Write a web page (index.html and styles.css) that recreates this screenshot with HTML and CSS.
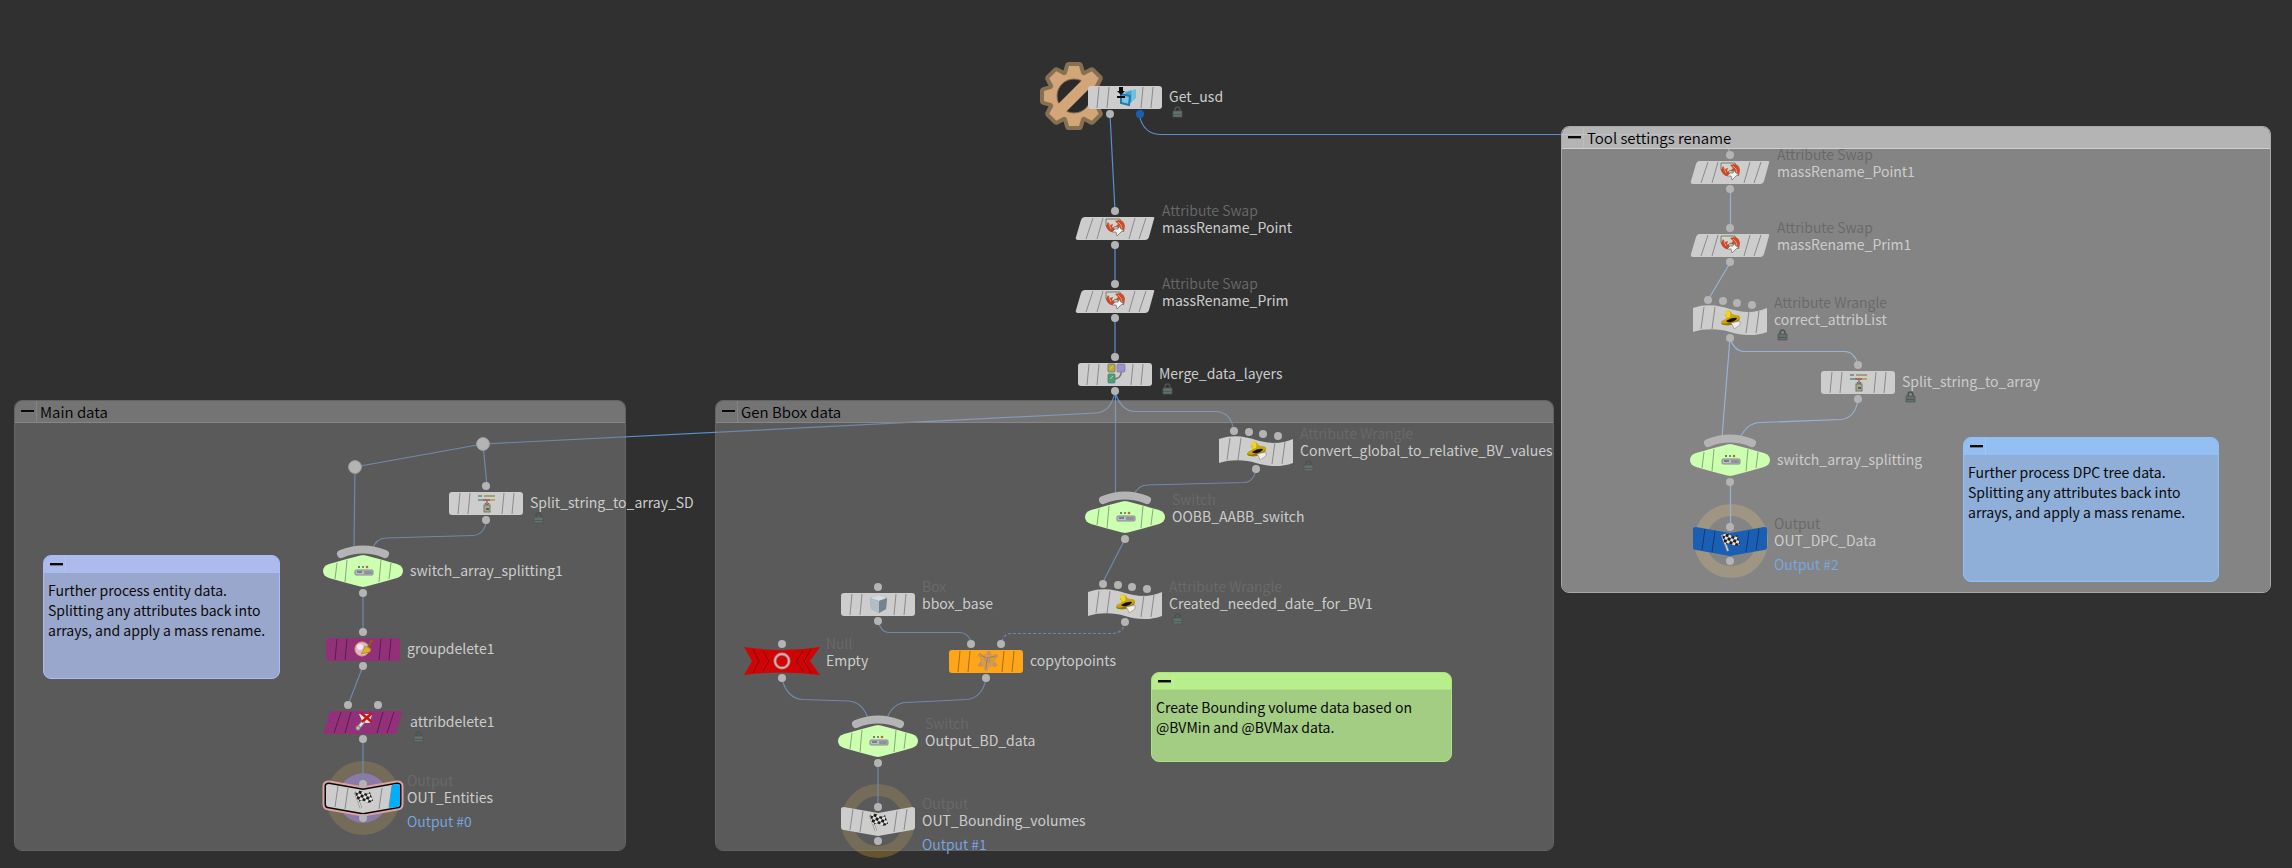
FILE: index.html
```html
<!DOCTYPE html>
<html lang="en">
<head>
<meta charset="utf-8">
<title>Network editor</title>
<link rel="stylesheet" href="styles.css">
</head>
<body>
<svg class="defs" width="0" height="0" aria-hidden="true">
  <defs>
    <!-- node bodies, centred on 0,0 -->
    <g id="rect">
      <rect class="body" x="-37" y="-11" width="74" height="23" rx="3"/>
      <path class="stripes" d="M-26-10L-28 11M-16-10L-18 11M18-10L16 11M28-10L26 11"/>
    </g>
    <g id="slant">
      <path class="body" d="M-30-11H38Q40-11 39-9L34 9Q33 12 30 12H-37Q-40 12-39 9L-34-8Q-33-11-30-11Z"/>
      <path class="stripes" d="M-22-10L-29 11M-12-10L-18 11M20-10L14 11M31-10L24 11"/>
    </g>
    <g id="wave">
      <path class="body" d="M-37-12C-22-17-10-14 0-11S24-6 37-12V12C24 17 10 15 0 12S-24 8-37 12Z"/>
      <path class="stripes" d="M-26-13L-29 9M-15-13L-18 9M19-9L16 13M29-9L26 13"/>
    </g>
    <g id="lens">
      <path class="arch" d="M-22-17Q0-26 22-17"/>
      <path class="body" d="M0-16Q2-16 34-7Q40-5 40 0Q40 5 34 7Q2 16 0 16T-34 7Q-40 5-40 0Q-40-5-34-7Q-2-16 0-16Z"/>
      <path class="stripes" d="M-26-8L-28 8M-16-11L-18 11M18-11L16 11M28-8L26 8"/>
    </g>
    <path id="bannerShape" d="M-34-14L0-8L34-14Q37-14 37-12V6Q37 9 34 9L0 15L-34 9Q-37 9-37 6V-12Q-37-14-34-14Z"/>
    <g id="banner">
      <use class="body" href="#bannerShape"/>
      <path class="stripes" d="M-25-12L-28 9M-15-10L-18 11M19-10L16 11M29-12L26 9"/>
    </g>
    <g id="ribbon">
      <path class="body" d="M-38-14Q0-8 38-14L28 0L38 14Q0 9-38 14L-30 0Z"/>
      <path class="stripes" d="M-29-12L-23 0L-29 12M-19-10L-13 0L-19 10M29-12L22 0L29 12M21-10L14 0L21 10"/>
    </g>
    <g id="ports11"><circle class="port" cy="-17" r="4"/><circle class="port" cy="17" r="4"/></g>
    <g id="ports21"><circle class="port" cx="-15" cy="-17" r="4"/><circle class="port" cx="15" cy="-17" r="4"/><circle class="port" cy="17" r="4"/></g>
    <g id="ports41"><circle class="port" cx="-22" cy="-20" r="4"/><circle class="port" cx="-7" cy="-19" r="4"/><circle class="port" cx="7" cy="-17" r="4"/><circle class="port" cx="22" cy="-15" r="4"/><circle class="port" cy="18" r="4"/></g>
    <g id="portsOut"><circle class="port" cy="-14" r="4"/><circle class="port" cy="20" r="4"/></g>

    <!-- icons, 20 x 20 centred on 0,0 -->
    <g id="iSwap">
      <path d="M-9-9H5L7-4L-1-1L-4 3L-9-2Z" fill="#d3d3ca" stroke="#7a7a72"/>
      <path d="M-9-2L-7-6L-5-3L-2-4L-3-1L0 1L-1 4L-4 4Q-8 2-9-2Z" fill="#c8492a"/>
      <path d="M0-7L4-8Q9-8 10-2L9 4L6 3L4 0L1-1L3-4Z" fill="#cc4d2c"/>
      <path d="M-6-4L-4 1M3-6L6-3L7 1" stroke="#e89a78" fill="none"/>
      <path d="M0 1L3 1L4-2L6 1L9 2L6 4L2 8L1 4L-3 4Z" fill="#f2f2f0" stroke="#666" stroke-width=".7"/>
    </g>
    <g id="iUsd">
      <path d="M4-6L11-8V1L5 6Z" fill="#6cc0de"/>
      <path d="M0-5L7-7V5L1 8Z" fill="#49a3cb" stroke="#8bd0e8" stroke-width=".7"/>
      <path d="M-4-3L5-1L4 8L-4 6Z" fill="#7cc4df" stroke="#2579ab" stroke-width="2"/>
      <path d="M-6-10H-2V-6H0L-4-2L-8-6H-6ZM-8-1H0V1H-8Z" fill="#0a0a0a"/>
    </g>
    <g id="iMerge">
      <path d="M6-2V0Q5 4 0 5H-2" fill="none" stroke="#777" stroke-width="1.5"/>
      <rect x="-7" y="-10" width="7" height="8" rx="1" fill="#b5ab4c" stroke="#6f6a3a" stroke-width=".7"/>
      <rect x="2" y="-10" width="8" height="8" rx="1" fill="#9a92cc" stroke="#7d78a4" stroke-width=".7"/>
      <rect x="-7" y="0" width="7" height="9" rx="1" fill="#4d9f7c" stroke="#3d7c62" stroke-width=".7"/>
      <path d="M-5-5L-2-8M-5 5L-2 2" stroke="#ddd67c" stroke-width=".8"/>
    </g>
    <g id="iHat">
      <path d="M-5-8Q-2-11 1-8Q2-5 6-5Q11-5 10-1Q8 4 0 5Q-8 6-9 3Q-9 0-4-1Q-3-3-5-5Z" fill="#c9a40c"/>
      <path d="M-5-8Q-2-11 0-8Q1-5 0-3L-4-2Q-3-5-5-6Z" fill="#ecd62b"/>
      <path d="M-9 3Q-5 5 1 2Q7 2 10-2Q8 4 0 5Q-8 6-9 3Z" fill="#8f7412"/>
      <path d="M-4 1Q2-3 7-2Q6 1 1 2Q-2 3-4 1Z" fill="#151205"/>
      <path d="M1 3L10 1V5L7 7L4 9L3 6Z" fill="#f0f0e6" stroke="#888" stroke-width=".6"/>
    </g>
    <g id="iSwitch">
      <circle cx="-4" cy="-4" r="1" fill="#555"/><circle cy="-4" r="1" fill="#666"/><circle cx="4" cy="-4" r="1.3" fill="#c8623a"/>
      <rect x="-8" y="-1" width="18" height="5" rx="1" fill="#b9bcc4" stroke="#84888f"/>
      <rect x="1" y="0" width="8" height="3" rx="1" fill="#8e9198"/>
      <path d="M-6 1H-1" stroke="#555" stroke-width="1.2"/>
    </g>
    <pattern id="checks" width="6" height="6" patternUnits="userSpaceOnUse" patternTransform="rotate(18)">
      <path d="M0 0H6V6H0Z" fill="#e2e2de"/><path d="M0 0H3V3H0ZM3 3H6V6H3Z" fill="#1b1b1b"/>
    </pattern>
    <g id="iFlag">
      <path d="M-8-6L-2 10" stroke="#8f948c" stroke-width="2.4"/><path d="M-8-6L-2 10" stroke="#dfe2da"/>
      <path d="M-8-6Q-3-9 0-6Q4-3 7-6L10 3Q6 6 3 4Q-1 1-5 4Z" fill="url(#checks)"/>
    </g>
    <g id="iBroom">
      <circle cx="-1" cy="0" r="7" fill="#dcb9cf" stroke="#dca36c"/>
      <circle cx="-3" cy="-2" r="3" fill="#f3e6ef"/>
      <path d="M9-9L5-2" stroke="#8a6512" stroke-width="2"/>
      <path d="M2-3L8 0L7 3L-2 5Q1 1 2-3Z" fill="#d9b429" stroke="#9c7a14" stroke-width=".6"/>
    </g>
    <g id="iAttDel">
      <path d="M-4-8H9L7 1H0Z" fill="#e8e4dc"/>
      <path d="M-4 5L1-1" stroke="#888" stroke-width="4"/><path d="M-4 5L1-1" stroke="#e6e6e6" stroke-width="2"/>
      <circle cx="-5" cy="6" r="2.2" fill="#bdbdbd" stroke="#777"/>
      <path d="M-2-9L9 0M9-9L-1 0" stroke="#cc1414" stroke-width="2.6"/>
    </g>
    <g id="iCube">
      <path d="M-8-6L1-9L9-6L8 5L1 9L-7 5Z" fill="#8d9aa5"/>
      <path d="M-8-6L1-9L9-6L1-3Z" fill="#d5dde3"/>
      <path d="M-8-6L1-3V9L-7 5Z" fill="#b1bec8"/>
      <path d="M1-3L9-6L8 5L1 9Z" fill="#75838f"/>
    </g>
    <g id="iCopy">
      <path d="M-6-6L3-8L10-5L9 4L0 8L-6 4Z" fill="#d99a4a"/>
      <path d="M-6-6L1-3L10-5M1-3L0 8" stroke="#b07c3c" fill="none"/>
      <g fill="#c4a78a" stroke="#9a7a5a" stroke-width=".6"><circle cx="-6" cy="-6" r="1.4"/><circle cx="3" cy="-8" r="1.4"/><circle cx="10" cy="-5" r="1.4"/><circle cx="9" cy="4" r="1.4"/><circle cx="0" cy="8" r="1.4"/><circle cx="-6" cy="4" r="1.4"/><circle cx="0" cy="-2" r="1.4"/><circle cx="3" cy="0" r="1.4"/></g>
    </g>
    <g id="iNull"><circle r="7" fill="#cf0707" stroke="#b98787" stroke-width="3"/><circle r="7" fill="none" stroke="#e0c4c4" stroke-width="1"/></g>
    <g id="iSplit">
      <path d="M-8-8H-4V-6H-8Z" fill="#8b8f93"/><path d="M-2-8H9V-6H-2Z" fill="#a39f7a"/>
      <path d="M-8-4H-3V-2H-8Z" fill="#6da39a"/><path d="M-3-4H4V-2H-3Z" fill="#b0675c"/><path d="M4-4H9V-2H4Z" fill="#b5a864"/>
      <path d="M1-2V3M-1 0L1 3L3 0" stroke="#4a4a4a" fill="none"/>
      <rect x="-2" y="2" width="6" height="7" fill="#a9a78e" stroke="#77776c"/><path d="M0 5H3V7H0Z" fill="#5f6052"/>
    </g>
    <g id="lock">
      <path d="M3 5V4Q3 1 5.500 1T8 4V5" fill="none" stroke="#4b5452" stroke-width="1.500"/>
      <path d="M1 5H10V11H1Z" fill="#62716e" stroke="#4b5452" stroke-width=".7"/><path d="M1 8H10V9H1Z" fill="#4f5b58"/>
    </g>
    <path id="tooth" d="M-8-20L-5-30H5L8-20Z"/>
    <g id="gearShape">
      <circle r="23"/>
      <use href="#tooth"/><use href="#tooth" transform="rotate(45)"/><use href="#tooth" transform="rotate(90)"/><use href="#tooth" transform="rotate(135)"/><use href="#tooth" transform="rotate(180)"/><use href="#tooth" transform="rotate(225)"/><use href="#tooth" transform="rotate(270)"/><use href="#tooth" transform="rotate(315)"/>
    </g>
  </defs>
</svg>

<main class="canvas">
  <svg class="wires" aria-hidden="true">
    <g class="halo">
      <circle cx="363" cy="798" r="31"/><circle cx="878" cy="821" r="31"/><circle cx="1731" cy="541" r="31"/>
    </g>
    <circle class="display-halo" cx="363" cy="798" r="25"/>
    <g class="wire">
      <path d="M1110 114L1115 211"/>
      <path d="M1139 114Q1143 134 1160 134.500H1710Q1727 136 1730 155"/>
      <path d="M1115 245V284M1115 318V357"/>
      <path d="M1115 392Q1111 412 1096 413L483 444L355 467L354 548"/>
      <path d="M1115.500 392V495"/>
      <path d="M1115 392Q1121 411 1135 411.500H1216Q1231 412 1234 431"/>
      <path d="M483 444L487 486M487 520Q484 535 473 535.500L386 538Q376 538 372 550"/>
      <path d="M363 592V632M363 666L348 705M363 739V784"/>
      <path d="M1256 469Q1254 482 1244 482.500L1147 485Q1138 485 1133 496"/>
      <path d="M1125 539L1102 584"/>
      <path d="M878 621Q881 632 888 632.500H960Q969 633 972 644"/>
      <path class="wire--dashed" d="M1125 622Q1123 633 1113 633.500H1011Q1003 634 1001 644"/>
      <path d="M782 679Q787 698 802 699.500L849 701Q862 702 868 718"/>
      <path d="M986 679Q982 698 967 699.500L906 702.500Q893 703 887 718"/>
      <path d="M878 762V807"/>
      <path d="M1730.500 190V228M1730 263L1708 300M1730 338L1722 437M1730.500 482V526"/>
      <path d="M1730 338Q1734 351 1744 351.500H1845Q1855 352 1858 365"/>
      <path d="M1858 400Q1855 418 1841 419.500L1760 422.500Q1747 423 1740 438"/>
    </g>
  </svg>

  <section class="netbox netbox--main">
    <header class="netbox__head"><button class="fold" type="button" aria-label="Collapse"></button><h2 class="netbox__title">Main data</h2></header>
    <div class="netbox__body"></div>
  </section>
  <section class="netbox netbox--gen">
    <header class="netbox__head"><button class="fold" type="button" aria-label="Collapse"></button><h2 class="netbox__title">Gen Bbox data</h2></header>
    <div class="netbox__body"></div>
  </section>
  <section class="netbox netbox--tool">
    <header class="netbox__head"><button class="fold" type="button" aria-label="Collapse"></button><h2 class="netbox__title">Tool settings rename</h2></header>
    <div class="netbox__body"></div>
  </section>

  <article class="note note--entity">
    <header class="note__head"><button class="fold" type="button" aria-label="Collapse"></button></header>
    <p class="note__text">Further process entity data.<br>Splitting any attributes back into arrays, and apply a mass rename.</p>
  </article>
  <article class="note note--bounds">
    <header class="note__head"><button class="fold" type="button" aria-label="Collapse"></button></header>
    <p class="note__text">Create Bounding volume data based on @BVMin and @BVMax data.</p>
  </article>
  <article class="note note--dpc">
    <header class="note__head"><button class="fold" type="button" aria-label="Collapse"></button></header>
    <p class="note__text">Further process DPC tree data.<br>Splitting any attributes back into arrays, and apply a mass rename.</p>
  </article>

  <span class="dot dot--a"></span>
  <span class="dot dot--b"></span>

  <svg class="gear" viewBox="-36 -36 72 72" aria-hidden="true">
    <use class="gear__rim" href="#gearShape"/>
    <use class="gear__fill" href="#gearShape"/>
    <circle class="gear__hole" r="17"/>
    <path class="gear__bar" d="M-15 15L15-15"/>
  </svg>

  <div class="node at-get-usd">
    <svg class="node__art" viewBox="-44 -36 88 72"><use href="#rect"/><use href="#iUsd"/><circle class="port" cx="-15" cy="17" r="4"/><circle class="port port--blue" cx="15" cy="17" r="4"/></svg>
    <div class="node__label"><span class="node__name">Get_usd</span><svg class="node__lock"><use href="#lock"/></svg></div>
  </div>
  <div class="node node--wide at-rename-point">
    <svg class="node__art" viewBox="-44 -36 88 72"><use href="#slant"/><use href="#iSwap"/><use href="#ports11"/></svg>
    <div class="node__label"><span class="node__type">Attribute Swap</span><span class="node__name">massRename_Point</span></div>
  </div>
  <div class="node node--wide at-rename-prim">
    <svg class="node__art" viewBox="-44 -36 88 72"><use href="#slant"/><use href="#iSwap"/><use href="#ports11"/></svg>
    <div class="node__label"><span class="node__type">Attribute Swap</span><span class="node__name">massRename_Prim</span></div>
  </div>
  <div class="node at-merge">
    <svg class="node__art" viewBox="-44 -36 88 72"><use href="#rect"/><use href="#iMerge"/><use href="#ports11"/></svg>
    <div class="node__label"><span class="node__name">Merge_data_layers</span><svg class="node__lock"><use href="#lock"/></svg></div>
  </div>

  <div class="node at-split-sd">
    <svg class="node__art" viewBox="-44 -36 88 72"><use href="#rect"/><use href="#iSplit"/><use href="#ports11"/></svg>
    <div class="node__label"><span class="node__name">Split_string_to_array_SD</span><svg class="node__lock"><use href="#lock"/></svg></div>
  </div>
  <div class="node node--wide node--green at-switch1">
    <svg class="node__art" viewBox="-44 -36 88 72"><use href="#lens"/><use href="#iSwitch"/><circle class="port" cy="22" r="4"/></svg>
    <div class="node__label"><span class="node__name">switch_array_splitting1</span></div>
  </div>
  <div class="node node--purple at-groupdelete">
    <svg class="node__art" viewBox="-44 -36 88 72"><use href="#rect"/><use href="#iBroom"/><use href="#ports11"/></svg>
    <div class="node__label"><span class="node__name">groupdelete1</span></div>
  </div>
  <div class="node node--wide node--purple at-attribdelete">
    <svg class="node__art" viewBox="-44 -36 88 72"><use href="#slant"/><use href="#iAttDel"/><use href="#ports21"/></svg>
    <div class="node__label"><span class="node__name">attribdelete1</span><svg class="node__lock"><use href="#lock"/></svg></div>
  </div>
  <div class="node at-out-entities">
    <svg class="node__art" viewBox="-44 -36 88 72"><use class="select" href="#bannerShape"/><use class="edge" href="#bannerShape"/><use href="#banner"/><path class="display-flag" d="M29-13L34-14Q37-14 37-12V6Q37 9 34 9L26 10Z"/><use href="#iFlag"/><use href="#portsOut"/></svg>
    <div class="node__label"><span class="node__type">Output</span><span class="node__name">OUT_Entities</span><span class="node__out">Output #0</span></div>
  </div>

  <div class="node at-convert">
    <svg class="node__art" viewBox="-44 -36 88 72"><use href="#wave"/><use href="#iHat"/><use href="#ports41"/></svg>
    <div class="node__label"><span class="node__type">Attribute Wrangle</span><span class="node__name">Convert_global_to_relative_BV_values</span><svg class="node__lock"><use href="#lock"/></svg></div>
  </div>
  <div class="node node--wide node--green at-oobb">
    <svg class="node__art" viewBox="-44 -36 88 72"><use href="#lens"/><use href="#iSwitch"/><circle class="port" cy="22" r="4"/></svg>
    <div class="node__label"><span class="node__type">Switch</span><span class="node__name">OOBB_AABB_switch</span></div>
  </div>
  <div class="node at-created">
    <svg class="node__art" viewBox="-44 -36 88 72"><use href="#wave"/><use href="#iHat"/><use href="#ports41"/></svg>
    <div class="node__label"><span class="node__type">Attribute Wrangle</span><span class="node__name">Created_needed_date_for_BV1</span><svg class="node__lock"><use href="#lock"/></svg></div>
  </div>
  <div class="node at-bbox">
    <svg class="node__art" viewBox="-44 -36 88 72"><use href="#rect"/><use href="#iCube"/><use href="#ports11"/></svg>
    <div class="node__label"><span class="node__type">Box</span><span class="node__name">bbox_base</span></div>
  </div>
  <div class="node node--red at-empty">
    <svg class="node__art" viewBox="-44 -36 88 72"><use href="#ribbon"/><use href="#iNull"/><use href="#ports11"/></svg>
    <div class="node__label"><span class="node__type">Null</span><span class="node__name">Empty</span></div>
  </div>
  <div class="node node--orange at-copy">
    <svg class="node__art" viewBox="-44 -36 88 72"><use href="#rect"/><use href="#iCopy"/><use href="#ports21"/></svg>
    <div class="node__label"><span class="node__name">copytopoints</span></div>
  </div>
  <div class="node node--wide node--green at-output-bd">
    <svg class="node__art" viewBox="-44 -36 88 72"><use href="#lens"/><use href="#iSwitch"/><circle class="port" cy="22" r="4"/></svg>
    <div class="node__label"><span class="node__type">Switch</span><span class="node__name">Output_BD_data</span></div>
  </div>
  <div class="node at-out-bounding">
    <svg class="node__art" viewBox="-44 -36 88 72"><use href="#banner"/><use href="#iFlag"/><use href="#portsOut"/></svg>
    <div class="node__label"><span class="node__type">Output</span><span class="node__name">OUT_Bounding_volumes</span><span class="node__out">Output #1</span></div>
  </div>

  <div class="node node--wide node--light at-rename-point1">
    <svg class="node__art" viewBox="-44 -36 88 72"><use href="#slant"/><use href="#iSwap"/><use href="#ports11"/></svg>
    <div class="node__label"><span class="node__type">Attribute Swap</span><span class="node__name">massRename_Point1</span></div>
  </div>
  <div class="node node--wide node--light at-rename-prim1">
    <svg class="node__art" viewBox="-44 -36 88 72"><use href="#slant"/><use href="#iSwap"/><use href="#ports11"/></svg>
    <div class="node__label"><span class="node__type">Attribute Swap</span><span class="node__name">massRename_Prim1</span></div>
  </div>
  <div class="node node--light at-correct">
    <svg class="node__art" viewBox="-44 -36 88 72"><use href="#wave"/><use href="#iHat"/><use href="#ports41"/></svg>
    <div class="node__label"><span class="node__type">Attribute Wrangle</span><span class="node__name">correct_attribList</span><svg class="node__lock"><use href="#lock"/></svg></div>
  </div>
  <div class="node node--light at-split">
    <svg class="node__art" viewBox="-44 -36 88 72"><use href="#rect"/><use href="#iSplit"/><use href="#ports11"/></svg>
    <div class="node__label"><span class="node__name">Split_string_to_array</span><svg class="node__lock"><use href="#lock"/></svg></div>
  </div>
  <div class="node node--wide node--light node--green at-switch">
    <svg class="node__art" viewBox="-44 -36 88 72"><use href="#lens"/><use href="#iSwitch"/><circle class="port" cy="22" r="4"/></svg>
    <div class="node__label"><span class="node__name">switch_array_splitting</span></div>
  </div>
  <div class="node node--light node--blue at-out-dpc">
    <svg class="node__art" viewBox="-44 -36 88 72"><use href="#banner"/><use href="#iFlag"/><use href="#portsOut"/></svg>
    <div class="node__label"><span class="node__type">Output</span><span class="node__name">OUT_DPC_Data</span><span class="node__out">Output #2</span></div>
  </div>
</main>
</body>
</html>
```
FILE: styles.css
```css
* { box-sizing: border-box; }

body {
  margin: 0;
  background: #303030;
  color: #ccc;
  font: 400 14px/20px "Noto Sans CJK SC", "Open Sans", sans-serif;
}

.defs { position: absolute; }

.canvas {
  position: relative;
  min-height: 100vh;
  overflow: hidden;
}

/* wires */
.wires {
  position: absolute;
  inset: 0;
  width: 100%;
  height: 100%;
}
.wire { fill: none; stroke: #5a8dd0; stroke-width: 1.2; }
.wire--dashed { stroke-dasharray: 3 2; }
.halo { fill: none; stroke: #66532f; stroke-width: 12; }
.display-halo { fill: #9270cc; }

/* network boxes */
.netbox {
  position: absolute;
  display: flex;
  flex-direction: column;
  border: 1px solid rgba(150, 150, 150, .5);
  border-radius: 8px;
  overflow: hidden;
}
.netbox__head {
  display: flex;
  align-items: center;
  height: 22px;
  background: rgba(161, 161, 161, .6);
  border-bottom: 1px solid #868686;
}
.netbox__title {
  margin: 0;
  padding-left: 3px;
  color: #000;
  font-size: 15px;
  font-weight: 350;
  line-height: 20px;
}
.netbox__body { flex: 1; background: rgba(132, 132, 132, .5); }
.netbox--main { left: 14px; top: 400px; width: 612px; height: 451px; }
.netbox--gen { left: 715px; top: 400px; width: 839px; height: 451px; }
.netbox--tool { left: 1561px; top: 126px; width: 710px; height: 467px; border-color: #a8a8a8; }
.netbox--tool .netbox__head { background: rgba(203, 203, 203, .85); border-bottom-color: #d0d0d0; }
.netbox--tool .netbox__body { background: rgba(216, 216, 216, .5); }

.fold {
  display: flex;
  align-items: center;
  width: 22px;
  height: 100%;
  margin: 0;
  padding: 0 0 0 6px;
  border: 0;
  border-right: 1px solid rgba(255, 255, 255, .12);
  background: none;
}
.fold::before {
  content: "";
  width: 13px;
  height: 2px;
  background: #0a0a0a;
  border-bottom: 1px solid rgba(230, 230, 230, .5);
  box-sizing: content-box;
}

/* sticky notes */
.note {
  position: absolute;
  border: 1px solid var(--edge);
  border-radius: 8px;
  background: var(--paper);
  color: #0a0a0a;
  overflow: hidden;
}
.note__head {
  height: 17px;
  background: var(--head);
  border-bottom: 1px solid var(--edge);
}
.note__text { margin: 0; padding: 7px 4px 0; }
.note--entity { left: 43px; top: 555px; width: 237px; height: 124px; --edge: #a9bcf4; --head: #adbbec; --paper: #9aa7cc; }
.note--bounds { left: 1151px; top: 672px; width: 301px; height: 90px; --edge: #aee27f; --head: #b8ef8c; --paper: #a3cd83; }
.note--dpc { left: 1963px; top: 437px; width: 256px; height: 145px; --edge: #90c0f8; --head: #93bff3; --paper: #8fafd9; }

/* wire dots */
.dot {
  position: absolute;
  width: 14px;
  height: 14px;
  border: 1px solid #989898;
  border-radius: 50%;
  background: #b4b4b4;
}
.dot--a { left: 476px; top: 437px; }
.dot--b { left: 348px; top: 460px; }

/* loop gear */
.gear { position: absolute; left: 1038px; top: 60px; width: 72px; height: 72px; }
.gear__rim { fill: #87704f; stroke: #87704f; stroke-width: 8; stroke-linejoin: round; }
.gear__fill { fill: #d2a679; }
.gear__hole { fill: #2a2a2a; stroke: #87704f; }
.gear__bar { stroke: #d2a679; stroke-width: 11; }

/* nodes */
.node {
  --fill: #cdcdcd;
  --line: #8a8a8a;
  --type: #6a6a6a;
  position: absolute;
  display: flex;
}
.node--green { --fill: #ccffb0; --line: #87a877; }
.node--purple { --fill: #92317a; --line: #5c1c4c; }
.node--red { --fill: #cf0505; --line: #860303; }
.node--orange { --fill: #ffa51a; --line: #a86c10; }
.node--blue { --fill: #1a5fb4; --line: #0f3c74; }
.node--light { --type: #686868; }
.node__art { width: 88px; height: 72px; overflow: visible; }
.node__label {
  display: grid;
  grid-template-rows: 18px 16px 16px 16px;
  align-items: center;
  padding-top: 9px;
  white-space: nowrap;
}
.node--wide .node__label { padding-left: 3px; }
.node__type { grid-row: 1; color: var(--type); font-weight: 350; line-height: 16px; }
.node__name { grid-row: 2; line-height: 16px; }
.node__lock { grid-row: 3; width: 11px; height: 12px; margin-left: 3px; }
.node__out { grid-row: 3 / 5; color: #78a8e6; font-weight: 350; line-height: 16px; }

.body { fill: var(--fill); }
.stripes { fill: none; stroke: var(--line); stroke-width: 1; }
.arch { fill: none; stroke: #b4b4b4; stroke-width: 8; stroke-linecap: round; }
.port { fill: #b4b4b4; }
.port--blue { fill: #1a5fb4; }
.select { stroke: #d9a3a0; stroke-width: 7; stroke-linejoin: round; }
.edge { stroke: #0a0a0a; stroke-width: 3; stroke-linejoin: round; }
.display-flag { fill: #00aeff; }

/* node positions on the canvas */
.at-get-usd { left: 1081px; top: 61px; }
.at-rename-point { left: 1071px; top: 192px; }
.at-rename-prim { left: 1071px; top: 265px; }
.at-merge { left: 1071px; top: 338px; }
.at-split-sd { left: 442px; top: 467px; }
.at-switch1 { left: 319px; top: 535px; }
.at-groupdelete { left: 319px; top: 613px; }
.at-attribdelete { left: 319px; top: 686px; }
.at-out-entities { left: 319px; top: 762px; }
.at-convert { left: 1212px; top: 415px; }
.at-oobb { left: 1081px; top: 481px; }
.at-created { left: 1081px; top: 568px; }
.at-bbox { left: 834px; top: 568px; }
.at-empty { left: 738px; top: 625px; }
.at-copy { left: 942px; top: 625px; }
.at-output-bd { left: 834px; top: 705px; }
.at-out-bounding { left: 834px; top: 785px; }
.at-rename-point1 { left: 1686px; top: 136px; }
.at-rename-prim1 { left: 1686px; top: 209px; }
.at-correct { left: 1686px; top: 284px; }
.at-split { left: 1814px; top: 346px; }
.at-switch { left: 1686px; top: 424px; }
.at-out-dpc { left: 1686px; top: 505px; }
```
